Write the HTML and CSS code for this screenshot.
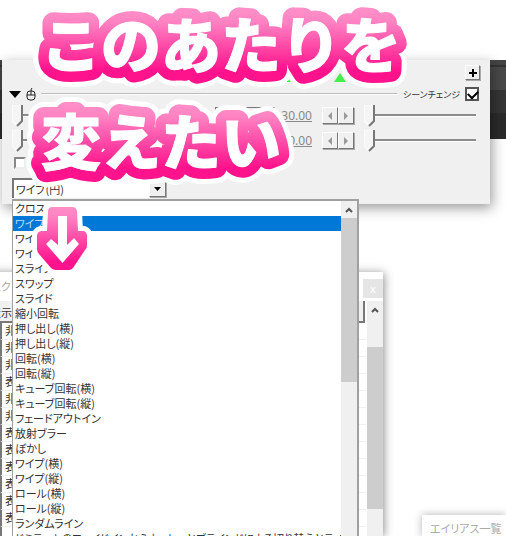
FILE: index.html
```html
<!DOCTYPE html>
<html lang="ja">
<head>
<meta charset="utf-8">
<title>シーンチェンジ</title>
<link rel="stylesheet" href="styles.css">
</head>
<body>
<main class="desktop">
  <div class="backdrop"></div>

  <section class="window objects">
    <header class="objects-title"><span>スク</span><button class="close" aria-label="閉じる">x</button></header>
    <div class="objects-body">
      <div class="objects-list">
        <div class="objects-head">表示</div>
        <div class="object">非</div><div class="object">非</div><div class="object">非</div>
        <div class="object">表</div><div class="object">非</div><div class="object">非</div>
        <div class="object">表</div><div class="object">表</div><div class="object">表</div>
        <div class="object">表</div><div class="object">表</div><div class="object">表</div>
        <div class="object"></div>
      </div>
      <div class="scrollbar objects-scroll">
        <svg class="chevron" viewBox="0 0 8 6"><path d="M1 5L4 2L7 5"/></svg>
        <div class="thumb"></div>
      </div>
    </div>
  </section>

  <section class="window alias">エイリアス一覧</section>

  <section class="window settings">
    <div class="toolbar">
      <svg class="markers" viewBox="0 0 64 10"><path d="M4 9V1L10 9Z"/><path d="M50 9L56 0L62 9Z"/><path class="mark-blue" d="M2 9L4 1V9Z"/></svg>
      <button class="add" aria-label="追加"><svg viewBox="0 0 10 10"><path d="M5 1V9M1 5H9"/></svg></button>
    </div>
    <div class="heading">
      <svg class="fold" viewBox="0 0 12 7"><path d="M0 0H12L6 7Z"/></svg>
      <svg class="mouse" viewBox="0 0 10 13"><rect x="1" y="3" width="8" height="9" rx="3"/><path d="M1 7H9M5 7V3Q5 1 6 0"/></svg>
      <span class="rule"></span>
      <label for="enabled">シーンチェンジ</label>
      <input id="enabled" class="check checked" type="checkbox" checked>
    </div>
    <div class="param">
      <input type="range" value="0" aria-label="調整 開始">
      <button class="name" aria-label="調整"></button>
      <span class="value">30.00</span>
      <span class="steps"><button aria-label="減らす"><svg viewBox="0 0 4 8"><path d="M4 0V8L0 4Z"/></svg></button><button aria-label="増やす"><svg viewBox="0 0 4 8"><path d="M0 0V8L4 4Z"/></svg></button></span>
      <input type="range" value="0" aria-label="調整 終了">
    </div>
    <div class="param">
      <input type="range" value="0" aria-label="時間 開始">
      <button class="name" aria-label="時間"></button>
      <span class="value">0.00</span>
      <span class="steps"><button aria-label="減らす"><svg viewBox="0 0 4 8"><path d="M4 0V8L0 4Z"/></svg></button><button aria-label="増やす"><svg viewBox="0 0 4 8"><path d="M0 0V8L4 4Z"/></svg></button></span>
      <input type="range" value="0" aria-label="時間 終了">
    </div>
    <div class="option"><input class="check" type="checkbox" aria-label="反転"></div>
    <div class="combo">
      <select aria-label="種類"><option>ワイプ(円)</option></select>
      <span class="drop"><svg viewBox="0 0 7 4"><path d="M0 0H7L3.5 4Z"/></svg></span>
    </div>
  </section>

  <div class="menu">
    <ul role="listbox" aria-label="シーンチェンジの種類">
      <li role="option">クロス</li>
      <li role="option" class="selected" aria-selected="true">ワイプ</li>
      <li role="option">ワイプ</li>
      <li role="option">ワイプ</li>
      <li role="option">スライス</li>
      <li role="option">スワップ</li>
      <li role="option">スライド</li>
      <li role="option">縮小回転</li>
      <li role="option">押し出し(横)</li>
      <li role="option">押し出し(縦)</li>
      <li role="option">回転(横)</li>
      <li role="option">回転(縦)</li>
      <li role="option">キューブ回転(横)</li>
      <li role="option">キューブ回転(縦)</li>
      <li role="option">フェードアウトイン</li>
      <li role="option">放射ブラー</li>
      <li role="option">ぼかし</li>
      <li role="option">ワイプ(横)</li>
      <li role="option">ワイプ(縦)</li>
      <li role="option">ロール(横)</li>
      <li role="option">ロール(縦)</li>
      <li role="option">ランダムライン</li>
      <li role="option">ドミラートのフェイドインからカットへとブラインドによる切り替えとライン</li>
    </ul>
    <div class="scrollbar menu-scroll">
      <svg class="chevron" viewBox="0 0 8 6"><path d="M1 5L4 2L7 5"/></svg>
      <div class="thumb"></div>
    </div>
  </div>

  <svg class="caption" viewBox="0 0 420 280" role="img" aria-label="このあたりを変えたい">
    <defs>
      <linearGradient id="g1" gradientUnits="userSpaceOnUse" x1="0" y1="12" x2="0" y2="80"><stop offset="0" stop-color="#ff8dc7"/><stop offset=".15" stop-color="#ff82c2"/><stop offset=".85" stop-color="#ff138c"/></linearGradient>
      <linearGradient id="g2" gradientUnits="userSpaceOnUse" x1="0" y1="106" x2="0" y2="178"><stop offset="0" stop-color="#ff8dc7"/><stop offset=".15" stop-color="#ff82c2"/><stop offset=".85" stop-color="#ff138c"/></linearGradient>
      <linearGradient id="g3" gradientUnits="userSpaceOnUse" x1="0" y1="207" x2="0" y2="271"><stop offset="0" stop-color="#ff8dc7"/><stop offset=".15" stop-color="#ff82c2"/><stop offset=".85" stop-color="#ff138c"/></linearGradient>
    </defs>
    <use class="halo" href="#line1"/>
    <use class="halo" href="#line2"/>
    <use class="halo-arrow" href="#badge"/>
    <use class="pink" href="#line1" stroke="url(#g1)"/>
    <use class="pink" href="#line2" stroke="url(#g2)"/>
    <g class="letters">
      <text id="line1" x="41" y="68">このあたりを</text>
      <text id="line2" x="41" y="165">変えたい</text>
    </g>
    <path id="badge" fill="url(#g3)" d="M52 207H72Q77 207 77 212L78 231L84 231Q87 232 87 236V246Q87 248 85 250L73 268Q71 270 69 270H56Q53 270 51 268L39 254Q37 252 37 249V236Q37 232 41 231L47 231L48 212Q48 207 52 207Z"/>
    <path class="arrow" d="M58 216H67V245L74 238L79 244L62.500 263L46 244L51 239L58 245Z"/>
  </svg>
</main>
</body>
</html>
```
FILE: styles.css
```css
* { box-sizing: border-box; }

body {
  margin: 0;
  background: #fff;
  color: #333;
  font: 11px/15px "Noto Sans CJK JP", sans-serif;
  font-feature-settings: "palt";
}

button, select, input { margin: 0; padding: 0; font: inherit; color: inherit; border-radius: 0; }
svg { display: block; flex: none; }

.desktop { position: relative; min-height: 100vh; overflow: hidden; }

.backdrop {
  margin-top: 60px;
  height: 79px;
  background: linear-gradient(#444 0 5px, #333 5px 7px, #494949 7px 30px, #353535 30px 53px, #2b2b2b 53px);
}

.window { position: absolute; }

/* Effect settings window */
.settings {
  left: 2px;
  top: 60px;
  width: 488px;
  padding: 5px 10px 6px;
  background: #f0f0f0;
  box-shadow: 2px 4px 12px rgba(0, 0, 0, .4);
}

.toolbar { display: flex; justify-content: flex-end; align-items: flex-start; height: 20px; }
.markers { width: 64px; height: 10px; margin: 8px 117px 0 0; fill: #43f04b; }
.mark-blue { fill: #4a6fa8; }

.add, .steps button, .name, .drop {
  display: flex;
  align-items: center;
  justify-content: center;
  background: #f0f0f0;
  border: 1px solid;
  border-color: #fff #777 #777 #fff;
  box-shadow: 1px 1px 0 #aaa;
}
.add { width: 15px; height: 15px; }
.add svg { width: 10px; height: 10px; stroke: #000; stroke-width: 2; }

.heading { display: flex; align-items: center; gap: 5px; height: 18px; margin: 0 1px 0 -3px; }
.fold { width: 12px; height: 7px; }
.mouse { width: 10px; height: 13px; fill: none; stroke: #222; }
.rule { flex: 1; height: 2px; background: #bbb; border-bottom: 1px solid #fff; margin-right: 1px; }
.heading label { font-size: 9px; }

.check {
  appearance: none;
  display: block;
  width: 12px;
  height: 12px;
  background: #fff;
  border: 2px solid;
  border-color: #888 #eee #eee #888;
}
.checked {
  width: 14px;
  height: 14px;
  border-color: #555;
}
.checked::after {
  content: "";
  display: block;
  width: 8px;
  height: 5px;
  margin: 1px;
  border: solid #000;
  border-width: 0 0 2px 2px;
  transform: rotate(-45deg);
}

.param {
  display: flex;
  align-items: center;
  gap: 10px;
  height: 25px;
  padding: 0 4px 0 0;
}
.name { width: 60px; height: 18px; margin-left: auto; border-color: #777 #fff #fff #777; box-shadow: none; }
.value { width: 32px; margin-left: -5px; color: #888; font: 12px/15px "Noto Sans", sans-serif; text-align: right; text-decoration: underline; }
.steps { display: flex; }
.steps button { width: 16px; height: 17px; }
.steps svg { width: 4px; height: 8px; fill: #999; }

input[type="range"] { appearance: none; width: 112px; height: 22px; background: none; }
input[type="range"]::-webkit-slider-runnable-track {
  height: 22px;
  background: linear-gradient(transparent 9px, #8c8c8c 9px 11px, #fff 11px 12px, transparent 12px);
}
input[type="range"]::-webkit-slider-thumb {
  appearance: none;
  width: 11px;
  height: 22px;
  background: url("data:image/svg+xml,%3Csvg xmlns='http://www.w3.org/2000/svg' width='11' height='22'%3E%3Cpath d='M0 0H10V16L5 21L0 16Z' fill='%23f5f5f5' stroke='%23fff'/%3E%3Cpath d='M10 0V16L5 21' fill='none' stroke='%23777' stroke-width='2'/%3E%3C/svg%3E");
}

.option { height: 25px; padding: 4px 2px; }

.combo {
  display: grid;
  grid-template-columns: 1fr 17px;
  width: 155px;
  height: 20px;
  padding-right: 1px;
  background: #fff;
  border: solid #777;
  border-width: 2px 0 0 2px;
}
.combo select { appearance: none; border: 0; background: none; padding-left: 2px; outline: 0; }
.drop { height: 17px; }
.drop svg { width: 7px; height: 4px; }

/* Open drop-down list */
.menu {
  position: absolute;
  left: 12px;
  top: 199px;
  bottom: 0;
  width: 347px;
  display: grid;
  grid-template-columns: 1fr 16px;
  overflow: hidden;
  background: #fff;
  border: solid #a0a0a0;
  border-width: 2px 2px 0 1px;
}
.menu ul { min-width: 0; min-height: 0; margin: 0; padding: 0; overflow: hidden; list-style: none; }
.menu li { height: 15px; padding-left: 2px; white-space: nowrap; }
.menu .selected { background: #0078d7; color: #b8dcff; }

.scrollbar { display: flex; flex-direction: column; align-items: center; background: #f0f0f0; }
.chevron { width: 8px; height: 6px; margin: 6px 0 5px; fill: none; stroke: #555; stroke-width: 2; }
.thumb { width: 100%; background: #cdcdcd; }
.menu-scroll .thumb { height: 164px; }

/* Object list window */
.objects {
  left: -12px;
  top: 272px;
  bottom: 0;
  width: 395px;
  display: flex;
  flex-direction: column;
  background: #fff;
  box-shadow: 1px 1px 9px rgba(0, 0, 0, .45);
}
.objects-title { display: flex; justify-content: space-between; height: 27px; padding: 7px 0 0 3px; color: #aaa; }
.close { width: 20px; height: 19px; border: 0; background: #e5e5e5; color: #fff; }
.objects-body { display: grid; grid-template-columns: 1fr 16px; flex: 1; padding-top: 3px; }
.objects-list { margin-right: 1px; }
.objects-head {
  height: 22px;
  padding: 4px 0 0 2px;
  margin-right: 1px;
  background: #f0f0f0;
  border: solid #777;
  border-width: 0 2px 2px 0;
}
.object { height: 17px; margin-left: 12px; padding-left: 3px; border-left: 2px solid #777; border-bottom: 1px solid #f0f0f0; }
.objects-scroll .chevron { margin: 6px 0 34px; }
.objects-scroll .thumb { height: 162px; }

.alias {
  left: 422px;
  right: 0;
  top: 515px;
  bottom: 0;
  padding: 6px 8px 0;
  white-space: nowrap;
  background: #fff;
  color: #aaa;
  box-shadow: 0 0 9px rgba(0, 0, 0, .3);
}

/* Caption lettering over the windows */
.caption { position: absolute; left: 0; top: 0; width: 420px; height: 280px; pointer-events: none; }
.caption text { font: 900 60px "Noto Sans CJK JP", sans-serif; font-feature-settings: normal; }
.caption use, .letters { stroke-linejoin: round; }
.halo { fill: #fff; stroke: #fff; stroke-width: 32px; }
.halo-arrow { stroke: #fff; stroke-width: 10px; }
.pink { fill: #ff4fa8; stroke-width: 22px; }
.letters, .arrow { fill: #fff; }
.letters { stroke: #fff; stroke-width: 1px; }
```
